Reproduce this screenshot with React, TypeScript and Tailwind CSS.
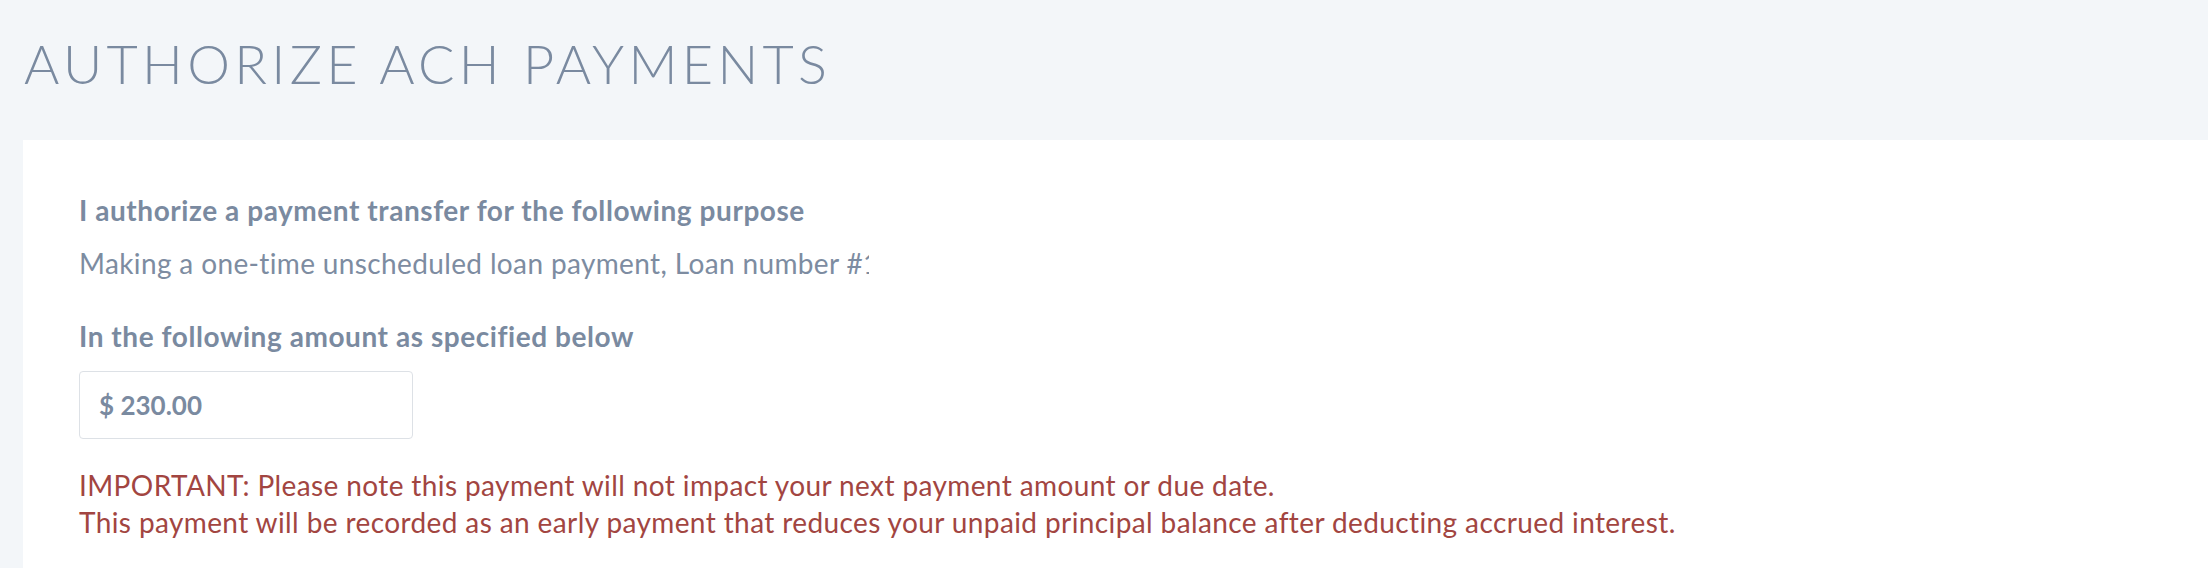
export default function App() {
  return (
    <div
      className="flex h-[568px] w-full flex-col overflow-hidden bg-[#f3f6f9]"
      style={{ fontFamily: 'Lato, "Open Sans", sans-serif' }}
    >
      {/* Page header */}
      <div className="h-[140px] shrink-0 px-[24px] pt-[37px]">
        <h1 className="text-[54px] leading-[54px] font-light tracking-[0.08em] text-[#7a8aa0]">
          AUTHORIZE ACH PAYMENTS
        </h1>
      </div>

      {/* Form panel */}
      <div className="ml-[23px] flex-1 bg-white pl-[56px] pt-[53px]">
        <p className="text-[28px] leading-[34px] font-bold tracking-[0.02em] text-[#7a8aa0]">
          I authorize a payment transfer for the following purpose
        </p>
        <p className="mt-[19px] w-[790px] overflow-hidden whitespace-nowrap text-[28px] leading-[34px] tracking-[0.013em] text-[#7d8ca1]">
          Making a one-time unscheduled loan payment, Loan number #1208743
        </p>

        <p className="mt-[39px] text-[28px] leading-[34px] font-bold tracking-[0.02em] text-[#7a8aa0]">
          In the following amount as specified below
        </p>
        <div className="mt-[18px] flex h-[68px] w-[334px] items-center rounded-[4px] border border-[#dde1e6] pl-[19px]">
          <span className="text-[26px] leading-[26px] font-bold text-[#7a8aa0]">$ 230.00</span>
        </div>

        <div className="mt-[28px] text-[28px] leading-[37px] tracking-[0.014em] text-[#a24541]">
          <p>IMPORTANT: Please note this payment will not impact your next payment amount or due date.</p>
          <p>
            This payment will be recorded as an early payment that reduces your unpaid principal balance after
            deducting accrued interest.
          </p>
        </div>
      </div>
    </div>
  );
}
